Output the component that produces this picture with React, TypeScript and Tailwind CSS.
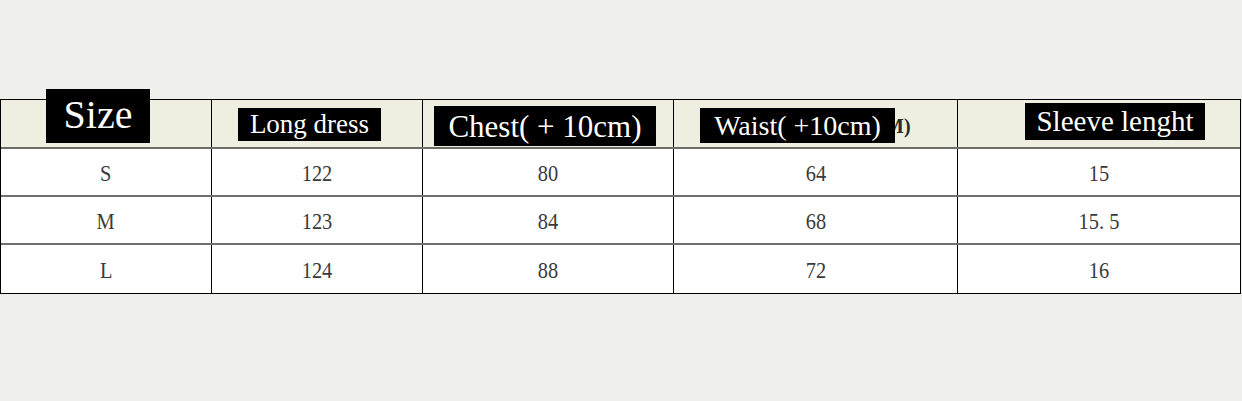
const serif = { fontFamily: '"Liberation Serif", "Times New Roman", serif' }

const rows = [
  ['S', '122', '80', '64', '15'],
  ['M', '123', '84', '68', '15. 5'],
  ['L', '124', '88', '72', '16'],
]

const cols = 'grid grid-cols-[211px_211px_251px_284px_1fr]'

export default function App() {
  return (
    <div className="min-h-screen bg-[#efefeb] pt-[99px]" style={serif}>
      <div className="w-[1241px] border border-black bg-white">
        {/* header */}
        <div className={`${cols} h-[49px] border-b-2 border-[#6e6e68] bg-[#eeeee1]`}>
          <div className="relative border-r border-black">
            <div className="relative z-10 ml-[45px] -mt-[11px] flex h-[54px] w-[104px] items-center justify-center bg-black pb-[2px] text-[40px] leading-none text-white">
              Size
            </div>
          </div>
          <div className="border-r border-black">
            <div className="ml-[26px] mt-[8px] flex h-[33px] w-[143px] items-center justify-center bg-black text-[27px] leading-none text-white">
              Long dress
            </div>
          </div>
          <div className="border-r border-black">
            <div className="ml-[11px] mt-[6px] flex h-[40px] w-[222px] items-center justify-center bg-black text-[31px] leading-none text-white">
              Chest( + 10cm)
            </div>
          </div>
          <div className="border-r border-black">
            <div className="ml-[26px] mt-[8px] flex items-center">
              <div className="relative z-10 flex h-[35px] w-[195px] items-center justify-center bg-black text-[28px] leading-none text-white">
                Waist( +10cm)
              </div>
              <span className="-ml-[10px] text-[20px] font-bold leading-none text-[#2a2a2a]">M)</span>
            </div>
          </div>
          <div>
            <div className="ml-[67px] mt-[3px] flex h-[37px] w-[180px] items-center justify-center bg-black text-[29px] leading-none text-white">
              Sleeve lenght
            </div>
          </div>
        </div>

        {/* body */}
        {rows.map((r, i) => (
          <div
            key={r[0]}
            className={`${cols} h-[48px] ${i < rows.length - 1 ? 'border-b-2 border-[#707070]' : ''}`}
          >
            {r.map((v, j) => (
              <div
                key={j}
                className={`flex items-center justify-center pt-[2px] text-[24px] text-[#3a3a3a] ${j < 4 ? 'border-r border-black' : ''}`}
              >
                <span className="inline-block scale-x-[0.85]">{v}</span>
              </div>
            ))}
          </div>
        ))}
      </div>
    </div>
  )
}
